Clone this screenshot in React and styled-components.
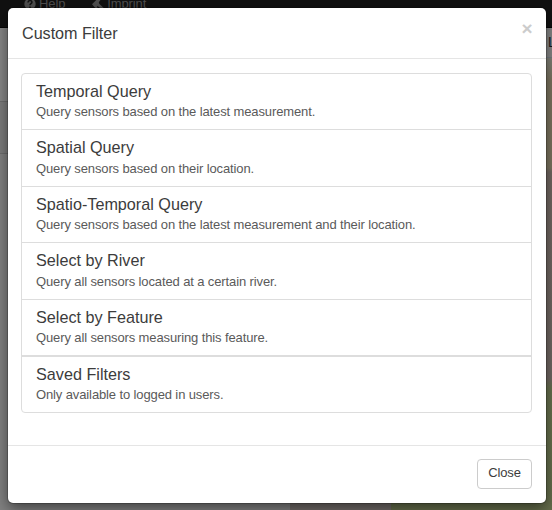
import React from 'react';
import styled, { createGlobalStyle } from 'styled-components';

const GlobalStyle = createGlobalStyle`
  *, *::before, *::after { box-sizing: border-box; }
  html, body { margin: 0; height: 100%; overflow: hidden; }
  body {
    font-family: "Liberation Sans", Arial, sans-serif;
    font-size: 13px;
    letter-spacing: -0.12px;
    line-height: 18px;
    color: #3c3c3c;
  }
  h4, p { margin: 0; font-weight: 400; }
`;

const Screen = styled.div`
  position: relative;
  width: 552px;
  height: 510px;
  overflow: hidden;
`;

const Page = styled.div`
  display: flex;
  flex-direction: column;
  height: 100%;
  background: #808080;
`;

const Navbar = styled.nav`
  display: flex;
  gap: 27px;
  flex: none;
  height: 28px;
  padding-left: 24px;
  background: #111;
  border-bottom: 1px solid #040404;
  color: #4f4f4f;
`;

const NavItem = styled.span`
  display: flex;
  gap: 3px;
  height: 18px;
  margin-top: -5px;
  svg { width: 12px; height: 12px; margin-top: 3px; }
`;

const Workspace = styled.div`
  display: flex;
  flex: 1;
`;

const Sidebar = styled.div`
  display: flex;
  flex-direction: column;
  flex: none;
  width: 290px;
`;

const SidebarRow = styled.div`
  height: ${({ $height }) => $height}px;
  background: ${({ $tone }) => $tone};
  border-bottom: 1px solid #6c6c6c;
`;

const MapColumn = styled.div`
  display: flex;
  flex-direction: column;
  flex: 1;
  min-width: 0;
`;

const MapHeader = styled.div`
  height: 30px;
  padding: 5px 0 0 258px;
  background: #858585;
  border-bottom: 1px solid #737b81;
  overflow: hidden;
  color: #15181c;
  font-size: 14px;
  white-space: nowrap;
`;

const MapView = styled.div`
  flex: 1;
  background:
    linear-gradient(90deg, #716b68 101px, transparent 101px),
    linear-gradient(#808078 0, #7b735f 22px, #7b735f 110px, #716761 114px, #706662 320px, #67704e 330px, #656d4b 100%);
`;

const Overlay = styled.div`
  position: absolute;
  inset: 0;
  padding: 8px 6px 7px 8px;
`;

const Dialog = styled.section`
  display: flex;
  flex-direction: column;
  height: 495px;
  background: #fff;
  border-radius: 5px;
  box-shadow: 0 0 0 1px rgba(0, 0, 0, 0.2), 0 5px 14px rgba(0, 0, 0, 0.5);
`;

const Header = styled.header`
  display: flex;
  justify-content: space-between;
  flex: none;
  height: 51px;
  padding: 14px 13px 0 14px;
  border-bottom: 1px solid #e5e5e5;
`;

const Title = styled.h4`
  font-size: 16.2px;
  letter-spacing: -0.05px;
  line-height: 22px;
`;

const Dismiss = styled.button`
  width: 12px;
  height: 12px;
  padding: 0;
  border: 0;
  background: none;
  color: #ccc;
  font: 700 19px/14px "Liberation Sans", Arial, sans-serif;
`;

const Body = styled.div`
  flex: 1;
  padding: 14px 14px 0 13px;
`;

const List = styled.div`
  display: flex;
  flex-direction: column;
  height: 340px;
  border: 1px solid #ddd;
  border-radius: 4px;
`;

const Option = styled.div`
  height: ${({ $height }) => $height}px;
  padding: 8px 14px 0;
  border-bottom: ${({ $divider }) => $divider}px solid #ddd;
`;

const OptionTitle = styled.h4`
  font-size: 16.2px;
  letter-spacing: 0;
  line-height: 18px;
`;

const OptionText = styled.p`
  margin-top: ${({ $gap }) => $gap}px;
  line-height: 16px;
  color: #5a5a5a;
`;

const Footer = styled.footer`
  display: flex;
  justify-content: flex-end;
  flex: none;
  height: 58px;
  padding: 13px 14px 0;
  border-top: 1px solid #e5e5e5;
`;

const CloseButton = styled.button`
  width: 55px;
  height: 30px;
  padding: 0 0 2px;
  border: 1px solid #ccc;
  border-radius: 4px;
  background: #fff;
  color: #3c3c3c;
  font: inherit;
  letter-spacing: inherit;
`;

const OPTIONS = [
  { title: 'Temporal Query', text: 'Query sensors based on the latest measurement.', height: 56, divider: 1, gap: 4 },
  { title: 'Spatial Query', text: 'Query sensors based on their location.', height: 57, divider: 1, gap: 5 },
  { title: 'Spatio-Temporal Query', text: 'Query sensors based on the latest measurement and their location.', height: 56, divider: 1, gap: 4 },
  { title: 'Select by River', text: 'Query all sensors located at a certain river.', height: 57, divider: 1, gap: 5 },
  { title: 'Select by Feature', text: 'Query all sensors measuring this feature.', height: 57, divider: 2, gap: 4 },
  { title: 'Saved Filters', text: 'Only available to logged in users.', height: 55, divider: 0, gap: 4 },
];

const HelpIcon = () => (
  <svg viewBox="0 0 12 12">
    <circle cx="6" cy="6" r="5.7" fill="#4f4f4f" />
    <path d="M4 4.5C4.2 1.8 8.2 2 7.9 4.4 7.7 5.8 6 5.6 6 7.3M6 8.5v1.5" fill="none" stroke="#111" strokeWidth="1.5" />
  </svg>
);

const GavelIcon = () => (
  <svg viewBox="0 0 12 12" fill="#4f4f4f">
    <path d="M0 6.2 5.8.5 9.5.7 6.8 4.2l.4 1.6L12 10.3 10.3 12 6 8.2 4.8 8.3l.8 1.2-1.4 1.4z" />
  </svg>
);

export default function App() {
  return (
    <Screen>
      <GlobalStyle />
      <Page>
        <Navbar>
          <NavItem><HelpIcon />Help</NavItem>
          <NavItem><GavelIcon />Imprint</NavItem>
        </Navbar>
        <Workspace>
          <Sidebar>
            <SidebarRow $height={74} $tone="#858585" />
            <SidebarRow $height={52} $tone="#7b7b7b" />
          </Sidebar>
          <MapColumn>
            <MapHeader>L</MapHeader>
            <MapView />
          </MapColumn>
        </Workspace>
      </Page>
      <Overlay>
        <Dialog role="dialog" aria-label="Custom Filter">
          <Header>
            <Title>Custom Filter</Title>
            <Dismiss aria-label="Dismiss">×</Dismiss>
          </Header>
          <Body>
            <List>
              {OPTIONS.map((o) => (
                <Option key={o.title} $height={o.height} $divider={o.divider}>
                  <OptionTitle>{o.title}</OptionTitle>
                  <OptionText $gap={o.gap}>{o.text}</OptionText>
                </Option>
              ))}
            </List>
          </Body>
          <Footer>
            <CloseButton>Close</CloseButton>
          </Footer>
        </Dialog>
      </Overlay>
    </Screen>
  );
}
